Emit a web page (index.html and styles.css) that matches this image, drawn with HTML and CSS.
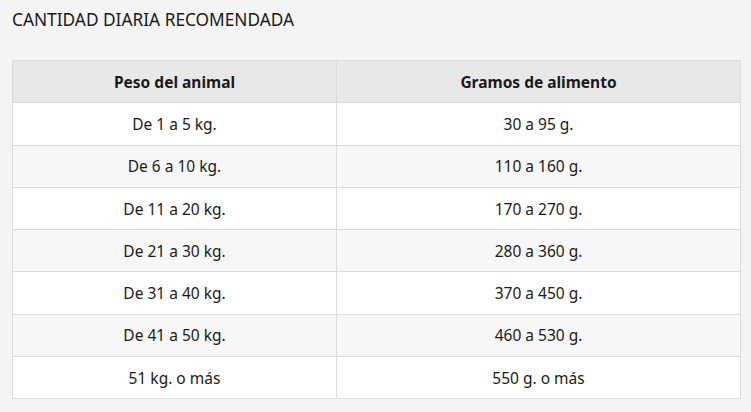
FILE: index.html
```html
<!DOCTYPE html>
<html lang="es">
<head>
<meta charset="utf-8">
<link rel="stylesheet" href="styles.css">
</head>
<body>
<div class="page">
  <h2 class="title">CANTIDAD DIARIA RECOMENDADA</h2>
  <table class="tbl">
    <colgroup><col class="c1"><col class="c2"></colgroup>
    <thead>
      <tr><th>Peso del animal</th><th>Gramos de alimento</th></tr>
    </thead>
    <tbody>
      <tr><td>De 1 a 5 kg.</td><td>30 a 95 g.</td></tr>
      <tr><td>De 6 a 10 kg.</td><td>110 a 160 g.</td></tr>
      <tr><td>De 11 a 20 kg.</td><td>170 a 270 g.</td></tr>
      <tr><td>De 21 a 30 kg.</td><td>280 a 360 g.</td></tr>
      <tr><td>De 31 a 40 kg.</td><td>370 a 450 g.</td></tr>
      <tr><td>De 41 a 50 kg.</td><td>460 a 530 g.</td></tr>
      <tr><td>51 kg. o más</td><td>550 g. o más</td></tr>
    </tbody>
  </table>
</div>
</body>
</html>
```
FILE: styles.css
```css
html, body {
  margin: 0;
  padding: 0;
  background: #f4f4f4;
}
.page {
  padding: 8px 12px 0 12px;
  font-family: "Noto Sans", "Open Sans", sans-serif;
  color: #1a1a1a;
}
.title {
  margin: 0 0 28px 0;
  font-size: 17.3px;
  font-weight: 400;
  line-height: 24px;
  letter-spacing: 0;
}
.tbl {
  width: 728px;
  border-collapse: collapse;
  table-layout: fixed;
  font-size: 15.5px;
}
.c1 { width: 324px; }
.c2 { width: 404px; }
.tbl th, .tbl td {
  border: 1px solid #dcdcdc;
  text-align: center;
  height: 41.3px;
  padding: 0;
}
.tbl th {
  background: #e8e8e8;
  font-weight: 700;
}
.tbl tbody tr:nth-child(odd) td { background: #ffffff; }
.tbl tbody tr:nth-child(even) td { background: #f7f7f7; }
```
